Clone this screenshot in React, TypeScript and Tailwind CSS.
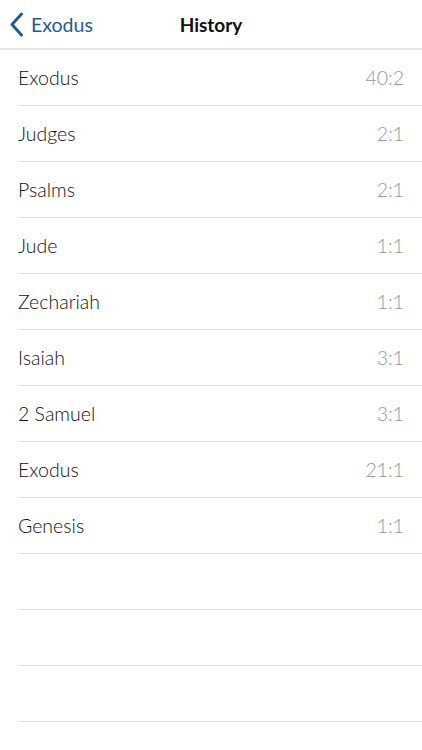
import React from "react";

const history: { book: string; ref: string }[] = [
  { book: "Exodus", ref: "40:2" },
  { book: "Judges", ref: "2:1" },
  { book: "Psalms", ref: "2:1" },
  { book: "Jude", ref: "1:1" },
  { book: "Zechariah", ref: "1:1" },
  { book: "Isaiah", ref: "3:1" },
  { book: "2 Samuel", ref: "3:1" },
  { book: "Exodus", ref: "21:1" },
  { book: "Genesis", ref: "1:1" },
];

export default function App() {
  return (
    <div className="w-[422px] h-[750px] bg-white overflow-hidden font-['Lato','Noto_Sans',sans-serif]">
      <div className="relative h-[50px] border-b-2 border-[#e6e6e6] flex items-center justify-center">
        <button className="absolute left-[9px] top-[12px] flex items-center gap-[7px] text-[#1e5b9b]">
          <svg width="15" height="25" viewBox="0 0 15 25" fill="none">
            <path d="M12.5 2 L3 12.5 L12.5 23" stroke="#1e5b9b" strokeWidth="3" strokeLinecap="round" strokeLinejoin="round" />
          </svg>
          <span className="text-[19.5px] leading-none">Exodus</span>
        </button>
        <h1 className="text-[19px] font-bold text-[#111] leading-none">History</h1>
      </div>
      <div>
        {history.map((item, i) => (
          <div key={i} className="ml-[18px] h-[56px] border-b border-[#e3e3e3] flex items-center justify-between pr-[18px]">
            <span className="text-[19.5px] text-[#111] font-light">{item.book}</span>
            <span className="text-[19.5px] text-[#999999] font-light">{item.ref}</span>
          </div>
        ))}
        {[0, 1, 2].map((i) => (
          <div key={"e" + i} className="ml-[18px] h-[56px] border-b border-[#e3e3e3]" />
        ))}
      </div>
    </div>
  );
}
